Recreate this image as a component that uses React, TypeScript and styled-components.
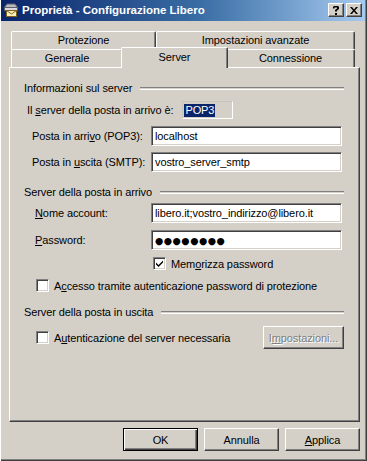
import React from 'react';
import styled, { createGlobalStyle } from 'styled-components';

const GlobalStyle = createGlobalStyle`
  html, body {
    margin: 0;
    padding: 0;
    background: #d4d0c8;
  }
  body {
    font-family: 'Liberation Sans', Arial, sans-serif;
    font-size: 11px;
    letter-spacing: -0.1px;
    color: #000;
  }
`;

const Window = styled.div`
  width: 367px;
  height: 461px;
  box-sizing: border-box;
  display: flex;
  flex-direction: column;
  background: #d4d0c8;
  padding: 0 2px 2px 1px;
  box-shadow: inset 1px 0 #ffffff, inset -1px -1px #404040, inset -2px -2px #808080;
`;

const TitleBar = styled.div`
  height: 21px;
  flex: none;
  display: flex;
  align-items: center;
  padding: 0 3px 1px 2px;
  box-sizing: border-box;
  background: linear-gradient(to right, #0a246a 0%, #3a6ea5 55%, #a6caf0 100%);
`;

const TitleText = styled.span`
  flex: 1;
  margin-left: 3px;
  color: #ffffff;
  font-weight: bold;
  font-size: 11.5px;
  letter-spacing: 0;
  white-space: nowrap;
`;

const CaptionButton = styled.div<{ $gap?: number }>`
  width: 16px;
  height: 14px;
  box-sizing: border-box;
  margin-left: ${({ $gap }) => $gap ?? 0}px;
  background: #d4d0c8;
  border-top: 1px solid #ffffff;
  border-left: 1px solid #ffffff;
  border-right: 1px solid #404040;
  border-bottom: 1px solid #404040;
  box-shadow: inset -1px -1px #808080;
  display: flex;
  align-items: center;
  justify-content: center;
`;

const Body = styled.div`
  display: flex;
  flex-direction: column;
  padding: 10px 5px 0 8px;
`;

const TabStrip = styled.div`
  display: flex;
  flex-direction: column;
  padding-left: 2px;
`;

const TabRow = styled.div`
  display: flex;
  height: 18px;
`;

const Tab = styled.div<{ $w: number; $active?: boolean }>`
  position: relative;
  width: ${({ $w, $active }) => $w + ($active ? 4 : 0)}px;
  height: ${({ $active }) => ($active ? 21 : 18)}px;
  margin: ${({ $active }) => ($active ? '-2px -2px -1px -2px' : '0')};
  z-index: ${({ $active }) => ($active ? 2 : 1)};
  box-sizing: border-box;
  background: #d4d0c8;
  border-top: 1px solid #ffffff;
  border-left: 1px solid #ffffff;
  border-right: 1px solid #404040;
  border-top-left-radius: 2px;
  border-top-right-radius: 2px;
  box-shadow: inset -1px 0 #808080;
  display: flex;
  justify-content: center;
  padding-top: ${({ $active }) => ($active ? 3 : 2)}px;
  line-height: 13px;
  white-space: nowrap;
`;

const Panel = styled.div`
  height: 355px;
  box-sizing: border-box;
  border-top: 1px solid #ffffff;
  border-left: 1px solid #ffffff;
  border-right: 1px solid #404040;
  border-bottom: 1px solid #404040;
  box-shadow: inset -1px -1px #808080;
  padding: 14px 15px 0 14px;
  display: flex;
  flex-direction: column;
`;

const GroupHeader = styled.div<{ $top: number }>`
  display: flex;
  align-items: center;
  height: 13px;
  line-height: 13px;
  margin-top: ${({ $top }) => $top}px;
  white-space: nowrap;

  &::after {
    content: '';
    flex: 1;
    margin-left: 8px;
    height: 1px;
    border-top: 1px solid #808080;
    border-bottom: 1px solid #ffffff;
  }
`;

const Row = styled.div<{ $top: number; $indent: number; $h?: number }>`
  display: flex;
  align-items: center;
  height: ${({ $h }) => $h ?? 20}px;
  margin-top: ${({ $top }) => $top}px;
  padding-left: ${({ $indent }) => $indent}px;
  white-space: nowrap;
`;

const Label = styled.span<{ $w?: number }>`
  width: ${({ $w }) => ($w ? `${$w}px` : 'auto')};
  flex: none;
`;

const Edit = styled.div<{ $w: number }>`
  width: ${({ $w }) => $w}px;
  height: 20px;
  box-sizing: border-box;
  background: #ffffff;
  border-top: 1px solid #808080;
  border-left: 1px solid #808080;
  border-right: 1px solid #ffffff;
  border-bottom: 1px solid #ffffff;
  box-shadow: inset 1px 1px #404040, inset -1px -1px #d4d0c8;
  padding: 0 3px;
  display: flex;
  align-items: center;
  line-height: 13px;
  overflow: hidden;
`;

const StaticField = styled.div`
  width: 51px;
  height: 18px;
  box-sizing: border-box;
  border-top: 1px solid #c8c4bc;
  border-left: 1px solid #c8c4bc;
  border-right: 1px solid #ffffff;
  border-bottom: 1px solid #ffffff;
  margin-left: 9px;
  padding-left: 1px;
  display: flex;
  align-items: center;
`;

const Selected = styled.span`
  background: #0a246a;
  color: #ffffff;
  padding: 0 1px;
  line-height: 13px;
`;

const Dots = styled.span`
  font-family: 'DejaVu Sans', sans-serif;
  font-size: 9.5px;
  letter-spacing: 0.5px;
  font-weight: bold;
`;

const CheckBox = styled.div`
  width: 13px;
  height: 13px;
  box-sizing: border-box;
  flex: none;
  background: #ffffff;
  border-top: 1px solid #808080;
  border-left: 1px solid #808080;
  border-right: 1px solid #ffffff;
  border-bottom: 1px solid #ffffff;
  box-shadow: inset 1px 1px #404040, inset -1px -1px #d4d0c8;
  display: flex;
  align-items: center;
  justify-content: center;
`;

const CheckLabel = styled.span`
  margin-left: 5px;
`;

const Button = styled.div<{ $w?: number; $default?: boolean; $disabled?: boolean }>`
  width: ${({ $w }) => $w ?? 75}px;
  height: 23px;
  box-sizing: border-box;
  flex: none;
  background: #d4d0c8;
  display: flex;
  align-items: center;
  justify-content: center;
  border: 1px solid ${({ $default }) => ($default ? '#000000' : 'transparent')};
  border-top-color: ${({ $default }) => ($default ? '#000000' : '#ffffff')};
  border-left-color: ${({ $default }) => ($default ? '#000000' : '#ffffff')};
  border-right-color: ${({ $default }) => ($default ? '#000000' : '#404040')};
  border-bottom-color: ${({ $default }) => ($default ? '#000000' : '#404040')};
  box-shadow: ${({ $default }) =>
    $default
      ? 'inset 1px 1px #ffffff, inset -1px -1px #404040, inset -2px -2px #808080'
      : 'inset -1px -1px #808080'};
  color: ${({ $disabled }) => ($disabled ? '#808080' : '#000000')};
  text-shadow: ${({ $disabled }) => ($disabled ? '1px 1px #ffffff' : 'none')};
`;

const SideButton = styled(Button)`
  margin-left: auto;
`;

const ButtonBar = styled.div`
  display: flex;
  justify-content: flex-end;
  gap: 6px;
  margin-top: 6px;
`;

const TitleIcon = () => (
  <svg width="16" height="16" viewBox="0 0 16 16">
    <path d="M1 6 L4 2 L12 2 L15 6 Z" fill="#b8b8c0" stroke="#606068" strokeWidth="1" />
    <rect x="1.5" y="5.5" width="13" height="3" fill="#d8d8e0" stroke="#606068" />
    <rect x="3.5" y="8.5" width="10" height="6" fill="#f8f0b8" stroke="#806020" />
    <path d="M3.5 8.5 L8.5 12 L13.5 8.5" fill="none" stroke="#806020" />
  </svg>
);

const Check = () => (
  <svg width="9" height="9" viewBox="0 0 9 9">
    <path d="M1 3.5 L3.5 6 L8 1.5 L8 3.5 L3.5 8 L1 5.5 Z" fill="#000" />
  </svg>
);

export default function App() {
  return (
    <>
      <GlobalStyle />
      <Window>
        <TitleBar>
          <TitleIcon />
          <TitleText>Proprietà - Configurazione Libero</TitleText>
          <CaptionButton>
            <svg width="8" height="9" viewBox="0 0 8 9">
              <path d="M1 1 L2 0 L6 0 L7 1 L7 3 L5 4.5 L5 5.5 L3 5.5 L3 4 L5 2.5 L5 1.5 L2.5 1.5 L2.5 2.5 L1 2.5 Z M3 7 L5 7 L5 9 L3 9 Z" fill="#000" />
            </svg>
          </CaptionButton>
          <CaptionButton $gap={2}>
            <svg width="8" height="7" viewBox="0 0 8 7">
              <path d="M0 0 L2 0 L4 2.5 L6 0 L8 0 L5 3.5 L8 7 L6 7 L4 4.5 L2 7 L0 7 L3 3.5 Z" fill="#000" />
            </svg>
          </CaptionButton>
        </TitleBar>
        <Body>
          <TabStrip>
            <TabRow>
              <Tab $w={145}>Protezione</Tab>
              <Tab $w={199}>Impostazioni avanzate</Tab>
            </TabRow>
            <TabRow>
              <Tab $w={112}>Generale</Tab>
              <Tab $w={103} $active>Server</Tab>
              <Tab $w={129}>Connessione</Tab>
            </TabRow>
          </TabStrip>
          <Panel>
            <GroupHeader $top={0}>Informazioni sul server</GroupHeader>
            <Row $top={6} $indent={3} $h={18}>
              <Label>
                Il <u>s</u>erver della posta in arrivo è:
              </Label>
              <StaticField>
                <Selected>POP3</Selected>
              </StaticField>
            </Row>
            <Row $top={7} $indent={8}>
              <Label $w={119}>
                Posta in arri<u>v</u>o (POP3):
              </Label>
              <Edit $w={191}>localhost</Edit>
            </Row>
            <Row $top={6} $indent={8}>
              <Label $w={119}>
                Posta in <u>u</u>scita (SMTP):
              </Label>
              <Edit $w={191}>vostro_server_smtp</Edit>
            </Row>

            <GroupHeader $top={14}>Server della posta in arrivo</GroupHeader>
            <Row $top={4} $indent={11}>
              <Label $w={116}>
                <u>N</u>ome account:
              </Label>
              <Edit $w={191}>libero.it;vostro_indirizzo@libero.it</Edit>
            </Row>
            <Row $top={7} $indent={11}>
              <Label $w={116}>
                <u>P</u>assword:
              </Label>
              <Edit $w={191}>
                <Dots>●●●●●●●●</Dots>
              </Edit>
            </Row>
            <Row $top={6} $indent={129} $h={15}>
              <CheckBox>
                <Check />
              </CheckBox>
              <CheckLabel>
                Mem<u>o</u>rizza password
              </CheckLabel>
            </Row>
            <Row $top={7} $indent={12} $h={15}>
              <CheckBox />
              <CheckLabel>
                A<u>c</u>cesso tramite autenticazione password di protezione
              </CheckLabel>
            </Row>

            <GroupHeader $top={13}>Server della posta in uscita</GroupHeader>
            <Row $top={7} $indent={12} $h={23}>
              <CheckBox />
              <CheckLabel>
                A<u>u</u>tenticazione del server necessaria
              </CheckLabel>
              <SideButton $w={81} $disabled>
                I<u>m</u>postazioni...
              </SideButton>
            </Row>
          </Panel>
          <ButtonBar>
            <Button $default>OK</Button>
            <Button>Annulla</Button>
            <Button>
              <span>
                <u>A</u>pplica
              </span>
            </Button>
          </ButtonBar>
        </Body>
      </Window>
    </>
  );
}
